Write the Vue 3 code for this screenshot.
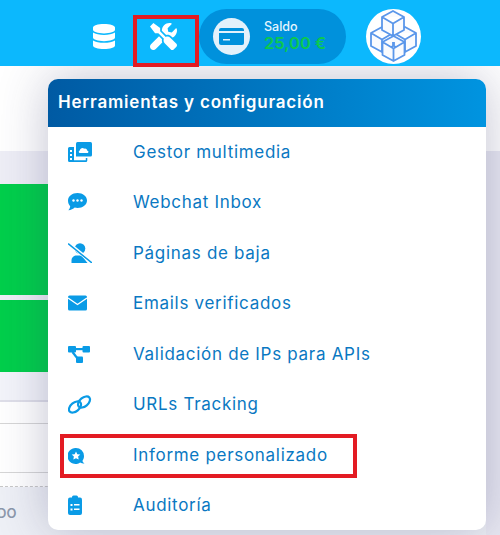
<template>
  <div class="page">
    <header class="topbar">
      <button class="top-btn db-btn" aria-label="Bases de datos">
        <svg width="22" height="25" viewBox="0 0 448 512" preserveAspectRatio="none" fill="#fff">
          <path d="M448 73.143v45.714C448 159.143 347.667 192 224 192S0 159.143 0 118.857V73.143C0 32.857 100.333 0 224 0s224 32.857 224 73.143zM448 176v102.857C448 319.143 347.667 352 224 352S0 319.143 0 278.857V176c48.125 33.143 136.208 48.572 224 48.572S399.874 209.143 448 176zm0 160v102.857C448 479.143 347.667 512 224 512S0 479.143 0 438.857V336c48.125 33.143 136.208 48.572 224 48.572S399.874 369.143 448 336z" />
        </svg>
      </button>
      <button class="top-btn tools-btn" aria-label="Herramientas">
        <svg width="27" height="27" viewBox="0 0 512 512" fill="#fff">
          <path d="M501.100 395.700 384 278.600c-23.100-23.100-57.600-27.600-85.400-13.900L192 158.100V96L64 0 0 64l96 128h62.100l106.600 106.600c-13.600 27.800-9.200 62.300 13.900 85.400l117.100 117.100c14.600 14.600 38.200 14.600 52.700 0l52.700-52.700c14.500-14.600 14.500-38.200 0-52.700z" />
          <path d="M331.700 225c28.300 0 54.900 11 74.900 31l19.400 19.400c15.800-6.900 30.800-16.500 43.800-29.500 37.100-37.100 49.700-89.300 37.900-136.700-2.200-9-13.500-12.100-20.100-5.500l-74.400 74.400-67.900-11.300L334 98.900l74.400-74.400c6.600-6.600 3.400-17.900-5.700-20.200-47.400-11.700-99.600.9-136.600 37.900-28.500 28.500-41.900 66.100-41.200 103.600l82.100 82.100c8.100-1.900 16.500-2.900 24.700-2.900z" />
          <path d="m227.800 307-56.700-56.700L18.700 402.800c-25 25-25 65.500 0 90.500s65.500 25 90.500 0l123.600-123.600c-7.600-19.900-9.900-41.600-5-62.700z" />
        </svg>
      </button>
      <div class="balance">
        <div class="balance-icon">
          <svg width="25" height="17" viewBox="0 0 25 17">
            <rect width="25" height="17" rx="2" fill="#0091dc" />
            <rect y="3" width="25" height="2" fill="#e3f1fb" />
            <rect x="4" y="11" width="7" height="1.500" fill="#e3f1fb" />
          </svg>
        </div>
        <div class="balance-text">
          <span class="balance-label">Saldo</span>
          <span class="balance-value">25,00 €</span>
        </div>
      </div>
      <div class="avatar">
        <svg width="55" height="55" viewBox="0 0 55 55" fill="#fafbfe" stroke="#5a96ea" stroke-width="1.800" stroke-linejoin="round">
          <path
            v-for="cube in cubes"
            :key="cube.id"
            :transform="`translate(${cube.x} ${cube.y})`"
            d="M11 0 22 6v13l-11 6-11-6V6zM0 6l11 6.500L22 6M11 12.500V25"
          />
        </svg>
      </div>
    </header>

    <!-- Fondo de la pagina, detras del menu -->
    <div class="backdrop">
      <div class="band-white"></div>
      <div class="content">
        <div class="band-grey"></div>
        <div class="band-green"></div>
        <div class="band-gap"></div>
        <div class="band-green second"></div>
        <div class="band-head"></div>
        <div class="band-row short"></div>
        <div class="band-row"></div>
        <div class="band-space"></div>
        <div class="band-foot"><span>DO</span></div>
      </div>
    </div>

    <div class="menu">
      <div class="menu-title">Herramientas y configuración</div>
      <ul class="menu-list">
        <li class="menu-item">
          <svg class="item-icon" viewBox="0 0 24 20" fill="#0a9be6">
            <path d="M8 1.500A1.500 1.500 0 0 1 9.500 0h13A1.500 1.500 0 0 1 24 1.500V13a1.500 1.500 0 0 1-1.500 1.500H8z" />
            <path d="M12 11c-1.500 0-1.700-2.200-.2-2.600.2-2 2.800-3.100 4.400-1.700 1.300-.6 2.900.3 2.900 1.700 1.700.1 1.800 2.600 0 2.600z" fill="#fff" />
            <path d="M1.500 5H6v13.200h11.800V16h1.500v2.500a1.500 1.500 0 0 1-1.500 1.500H1.500A1.500 1.500 0 0 1 0 18.500v-12A1.500 1.500 0 0 1 1.500 5z" />
            <path d="M2 8h2v2H2zM2 12h2v2H2zM2 16h2v2H2z" fill="#fff" />
          </svg>
          <span>Gestor multimedia</span>
        </li>
        <li class="menu-item">
          <svg class="item-icon" viewBox="0 0 24 20" fill="#0a9be6">
            <path d="M9.500 1C14.800 1 19 4.300 19 8.500S14.800 16 9.500 16c-1 0-1.900-.1-2.800-.4C5.300 17 3 18.200.3 18.200c1-1 1.800-2.500 1.900-4C.8 12.900 0 10.800 0 8.500 0 4.300 4.200 1 9.500 1z" />
            <circle cx="5.500" cy="8.500" r="1.200" fill="#fff" /><circle cx="9.500" cy="8.500" r="1.200" fill="#fff" /><circle cx="13.500" cy="8.500" r="1.200" fill="#fff" />
          </svg>
          <span>Webchat Inbox</span>
        </li>
        <li class="menu-item">
          <svg class="item-icon" viewBox="0 0 24 20" fill="#0a9be6">
            <circle cx="12" cy="5.500" r="5.300" />
            <path d="M3.500 20v-2.500c0-3.300 2.700-5 5-5h5l6 7.500z" />
            <path d="M0 0 24 19.500" stroke="#fff" stroke-width="3.600" />
            <path d="M0 .5 24 20" stroke="#0a9be6" stroke-width="1.500" />
          </svg>
          <span>Páginas de baja</span>
        </li>
        <li class="menu-item">
          <svg class="item-icon" viewBox="0 0 24 20" fill="#0a9be6">
            <rect y="2.500" width="19" height="15" rx="1.500" />
            <path d="M0 5 9.500 11.500 19 5" fill="none" stroke="#fff" stroke-width="1.400" />
          </svg>
          <span>Emails verificados</span>
        </li>
        <li class="menu-item">
          <svg class="item-icon" viewBox="0 0 24 20" fill="#0a9be6">
            <rect x="0" y="2" width="8" height="6.500" rx="1" />
            <rect x="14.500" y="2" width="7.500" height="6.500" rx="1" />
            <rect x="8" y="12.500" width="7" height="6.500" rx="1" />
            <path d="M7 4h8v2.200H7z" />
            <path d="m4.500 8 5 6.500" stroke="#0a9be6" stroke-width="2.200" />
          </svg>
          <span>Validación de IPs para APIs</span>
        </li>
        <li class="menu-item">
          <svg class="item-icon" viewBox="0 0 24 20" fill="none" stroke="#0a9be6" stroke-width="2.200">
            <ellipse cx="7" cy="13" rx="7" ry="4.300" transform="rotate(-40 7 13)" />
            <ellipse cx="16" cy="8" rx="7" ry="4.300" transform="rotate(-40 16 8)" />
          </svg>
          <span>URLs Tracking</span>
        </li>
        <li class="menu-item marked">
          <svg class="item-icon" viewBox="0 0 24 20" fill="#0a9be6">
            <path d="M8 3a8 8 0 0 1 8 8c0 2-.7 3.500-1.500 4.700.1 1 .7 1.800 2 2.800-1.700 0-3.200-.4-4.300-1.100A8 8 0 1 1 8 3z" />
            <path d="m8 6.500 1.300 2.700 3 .4-2.200 2 .6 3L8 13.200l-2.700 1.400.6-3-2.200-2 3-.4z" fill="#fff" />
          </svg>
          <span>Informe personalizado</span>
        </li>
        <li class="menu-item">
          <svg class="item-icon" viewBox="0 0 24 20" fill="#0a9be6">
            <rect y="2.500" width="14" height="17.500" rx="2" />
            <rect x="4" y="0.500" width="6" height="4" rx="1.500" />
            <path d="M2.500 9h2v2h-2zM6 9h5.500v1.500H6zM2.500 13.500h2v2h-2zM6 13.500h5.500V15H6z" fill="#fff" />
          </svg>
          <span>Auditoría</span>
        </li>
      </ul>
    </div>
  </div>
</template>

<script setup>
const cubes = [
  { id: 'left', x: 5, y: 18 },
  { id: 'right', x: 28, y: 18 },
  { id: 'top', x: 16, y: 2 },
  { id: 'bottom', x: 16.5, y: 27 }
];
</script>

<style>
html, body { margin: 0; padding: 0; }
body { overflow: hidden; }
</style>

<style scoped>
.page {
  position: relative;
  width: 500px;
  height: 535px;
  overflow: hidden;
  font-family: "Inter", "Open Sans", sans-serif;
  background: #fff;
}

.topbar {
  position: relative;
  z-index: 3;
  height: 66px;
  background: #0cb8fd;
  display: flex;
  align-items: center;
  padding: 6px 0 0 93px;
  box-sizing: border-box;
}

.top-btn {
  background: none;
  border: none;
  padding: 0;
  display: flex;
  align-items: center;
  justify-content: center;
}

.db-btn { width: 22px; margin-right: 18px; }

.tools-btn {
  position: relative;
  width: 66px;
  height: 52px;
  padding-right: 5px;
  box-sizing: border-box;
}

/* Marca roja de la captura */
.tools-btn::after {
  content: "";
  position: absolute;
  left: 0;
  top: 5px;
  width: 66px;
  height: 52px;
  border: 4px solid #e31b23;
  box-sizing: border-box;
}

.balance {
  width: 147px;
  height: 55px;
  border-radius: 28px;
  background: #0091dc;
  display: flex;
  align-items: center;
  padding-left: 14px;
  gap: 14px;
  box-sizing: border-box;
}

.balance-icon {
  width: 37px;
  height: 37px;
  border-radius: 50%;
  background: #e3f1fb;
  display: flex;
  align-items: center;
  justify-content: center;
}

.balance-text { display: flex; flex-direction: column; }

.balance-label {
  color: #e6f5fe;
  font-size: 12.500px;
  font-weight: 500;
  line-height: 14px;
}

.balance-value {
  color: #0bc850;
  font-size: 16.500px;
  font-weight: 600;
  line-height: 18px;
}

.avatar {
  width: 55px;
  height: 55px;
  border-radius: 50%;
  background: #fff;
  margin-left: 20px;
  overflow: hidden;
}

.avatar svg { display: block; }

.backdrop { display: flex; flex-direction: column; }
.band-white { height: 85px; background: #fff; }
.content { background: #e9e9f3; }
.content > div { width: 486px; }
.band-grey { height: 33px; background: #eeeef6; }
.band-green { height: 111px; background: #00cf4b; }
.band-green.second { height: 72px; }
.band-gap { height: 5px; background: #eeeef6; }
.band-head { height: 28px; background: #f3f4fa; border-bottom: 2px solid #dfdfe9; }
.band-row { height: 48px; background: #fff; border-bottom: 1px solid #d6d6d6; }
.band-row.short { height: 21px; }
.band-space { height: 13px; border-bottom: 1px dashed #c8c8c8; background: #fff; }
.band-foot { height: 48px; background: #eef0f6; padding-top: 18px; box-sizing: border-box; }
.band-foot span { display: block; color: #8c98ab; font-size: 13px; font-weight: 600; margin-left: -3px; }

.menu {
  position: absolute;
  z-index: 2;
  top: 79px;
  left: 48px;
  width: 438px;
  height: 451px;
  border-radius: 10px;
  background: #fff;
  box-shadow: 0 0 50px rgba(50, 50, 100, 0.3);
}

.menu-title {
  height: 48px;
  border-radius: 10px 10px 0 0;
  background: linear-gradient(90deg, #005aa3 0%, #0094e0 100%);
  color: #fff;
  font-size: 17px;
  font-weight: 600;
  letter-spacing: 0.8px;
  line-height: 46px;
  padding-left: 10px;
}

.menu-list {
  list-style: none;
  margin: -0.3px 0 0;
  padding: 0;
}

.menu-item {
  position: relative;
  height: 50.500px;
  display: flex;
  align-items: center;
  padding-left: 20px;
  color: #0a78c2;
  font-size: 17px;
  letter-spacing: 0.7px;
  gap: 41px;
}

.item-icon { width: 24px; height: 20px; flex: none; }

.marked::after {
  content: "";
  position: absolute;
  left: 12px;
  top: 4px;
  width: 297px;
  height: 44px;
  border: 4px solid #e31b23;
  box-sizing: border-box;
}
</style>
